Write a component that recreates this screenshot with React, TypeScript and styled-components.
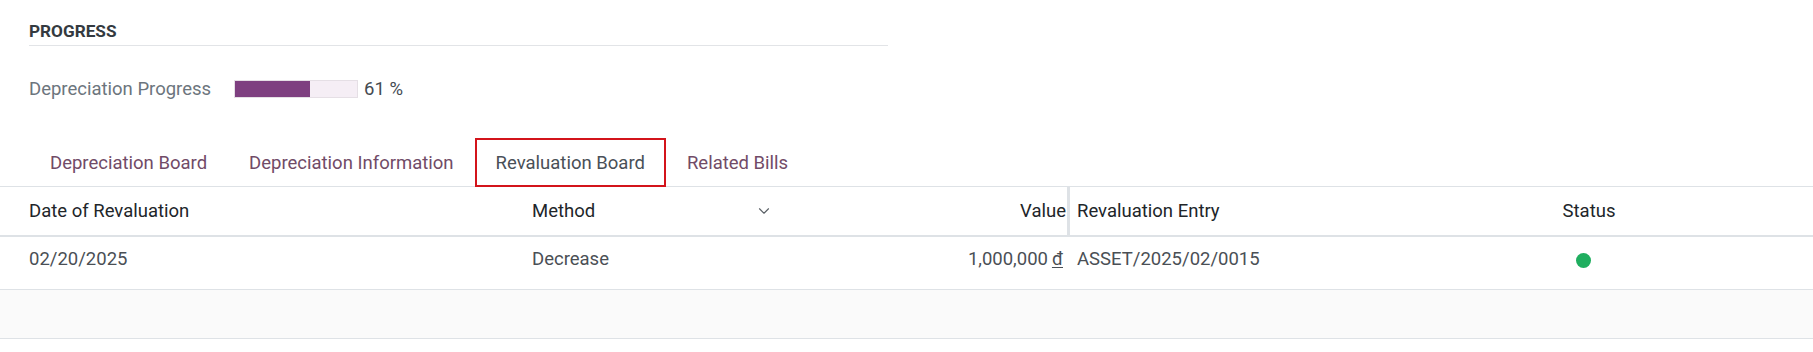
import React from "react";
import styled, { createGlobalStyle } from "styled-components";
import { FiChevronDown } from "react-icons/fi";

const GlobalStyle = createGlobalStyle`
  html, body {
    margin: 0;
    padding: 0;
    background: #fff;
  }
  body {
    font-family: Roboto, "Noto Sans", sans-serif;
    font-size: 18.5px;
    color: #212529;
  }
`;

const Page = styled.div`
  width: 1813px;
  height: 352px;
  overflow: hidden;
`;

const Section = styled.div`
  padding: 21px 0 0 29px;
  width: 859px;
`;

const SectionTitle = styled.div`
  font-size: 17.2px;
  font-weight: 700;
  color: #343a40;
  line-height: 20px;
  padding-bottom: 4px;
  border-bottom: 1px solid #e2e4e7;
`;

const ProgressRow = styled.div`
  display: flex;
  align-items: center;
  margin-top: 33px;
  height: 20px;
`;

const Label = styled.div`
  color: #6c757d;
  width: 205px;
`;

const Bar = styled.div`
  width: 122px;
  height: 16px;
  background: #f5eef5;
  border: 1px solid #e5dfe5;
  box-sizing: content-box;
`;

const BarFill = styled.div`
  height: 100%;
  background: #7e3f80;
`;

const Percent = styled.div`
  margin-left: 6px;
  color: #444b52;
`;

const Tabs = styled.div`
  display: flex;
  margin-top: 39px;
  padding-left: 29px;
  border-bottom: 1px solid #dee2e6;
  height: 49px;
  box-sizing: border-box;
`;

const Tab = styled.div<{ $active?: boolean }>`
  display: flex;
  align-items: center;
  padding: 0 19px;
  height: 49px;
  margin-bottom: -1px;
  box-sizing: border-box;
  color: ${(p) => (p.$active ? "#495057" : "#714b67")};
  border: 2px solid ${(p) => (p.$active ? "#d3141b" : "transparent")};
`;

const Table = styled.div`
  display: grid;
  grid-template-columns: 520px 260px 287px 3px 295px 1fr;
`;

const HeadCell = styled.div<{ $align?: string }>`
  height: 48px;
  display: flex;
  align-items: center;
  justify-content: ${(p) => p.$align || "flex-start"};
  border-bottom: 2px solid #dee2e6;
  color: #212529;
`;

const Cell = styled.div<{ $align?: string }>`
  height: 53px;
  box-sizing: border-box;
  padding-top: 10px;
  line-height: 24px;
  display: flex;
  align-items: flex-start;
  justify-content: ${(p) => p.$align || "flex-start"};
  border-bottom: 1px solid #dee2e6;
  color: #4a4f55;
`;

const Pad = styled.span<{ $left?: number; $right?: number }>`
  padding-left: ${(p) => p.$left ?? 0}px;
  padding-right: ${(p) => p.$right ?? 0}px;
`;

const Separator = styled.div`
  background: #dee2e6;
  height: 48px;
  border-bottom: 2px solid #dee2e6;
`;

const Chevron = styled.span`
  display: flex;
  margin-left: auto;
  margin-right: 7px;
  color: #5a6066;
`;

const Dot = styled.span`
  width: 15px;
  height: 15px;
  border-radius: 50%;
  background: #1fae5f;
  margin-top: 6px;
  margin-right: 11px;
`;

const Currency = styled.span`
  text-decoration: underline;
  text-underline-offset: 2px;
  margin-left: 4px;
`;

const EmptyRow = styled.div`
  grid-column: 1 / -1;
  height: 48px;
  background: #fafafa;
  border-bottom: 1px solid #dee2e6;
`;

export default function App() {
  const progress = 61;
  return (
    <Page>
      <GlobalStyle />
      <Section>
        <SectionTitle>PROGRESS</SectionTitle>
        <ProgressRow>
          <Label>Depreciation Progress</Label>
          <Bar>
            <BarFill style={{ width: `${progress + 0.5}%` }} />
          </Bar>
          <Percent>{progress} %</Percent>
        </ProgressRow>
      </Section>
      <Tabs>
        <Tab>Depreciation Board</Tab>
        <Tab>Depreciation Information</Tab>
        <Tab $active>Revaluation Board</Tab>
        <Tab>Related Bills</Tab>
      </Tabs>
      <Table>
        <HeadCell>
          <Pad $left={29}>Date of Revaluation</Pad>
        </HeadCell>
        <HeadCell>
          <Pad $left={12}>Method</Pad>
          <Chevron>
            <FiChevronDown size={18} strokeWidth={1.5} />
          </Chevron>
        </HeadCell>
        <HeadCell $align="flex-end">
          <Pad $right={1}>Value</Pad>
        </HeadCell>
        <Separator />
        <HeadCell>
          <Pad $left={7}>Revaluation Entry</Pad>
        </HeadCell>
        <HeadCell $align="center">
          <Pad>Status</Pad>
        </HeadCell>

        <Cell>
          <Pad $left={29}>02/20/2025</Pad>
        </Cell>
        <Cell>
          <Pad $left={12}>Decrease</Pad>
        </Cell>
        <Cell $align="flex-end">
          <Pad $right={4}>
            1,000,000<Currency>đ</Currency>
          </Pad>
        </Cell>
        <Cell />
        <Cell>
          <Pad $left={7}>ASSET/2025/02/0015</Pad>
        </Cell>
        <Cell $align="center">
          <Dot />
        </Cell>
        <EmptyRow />
      </Table>
    </Page>
  );
}
